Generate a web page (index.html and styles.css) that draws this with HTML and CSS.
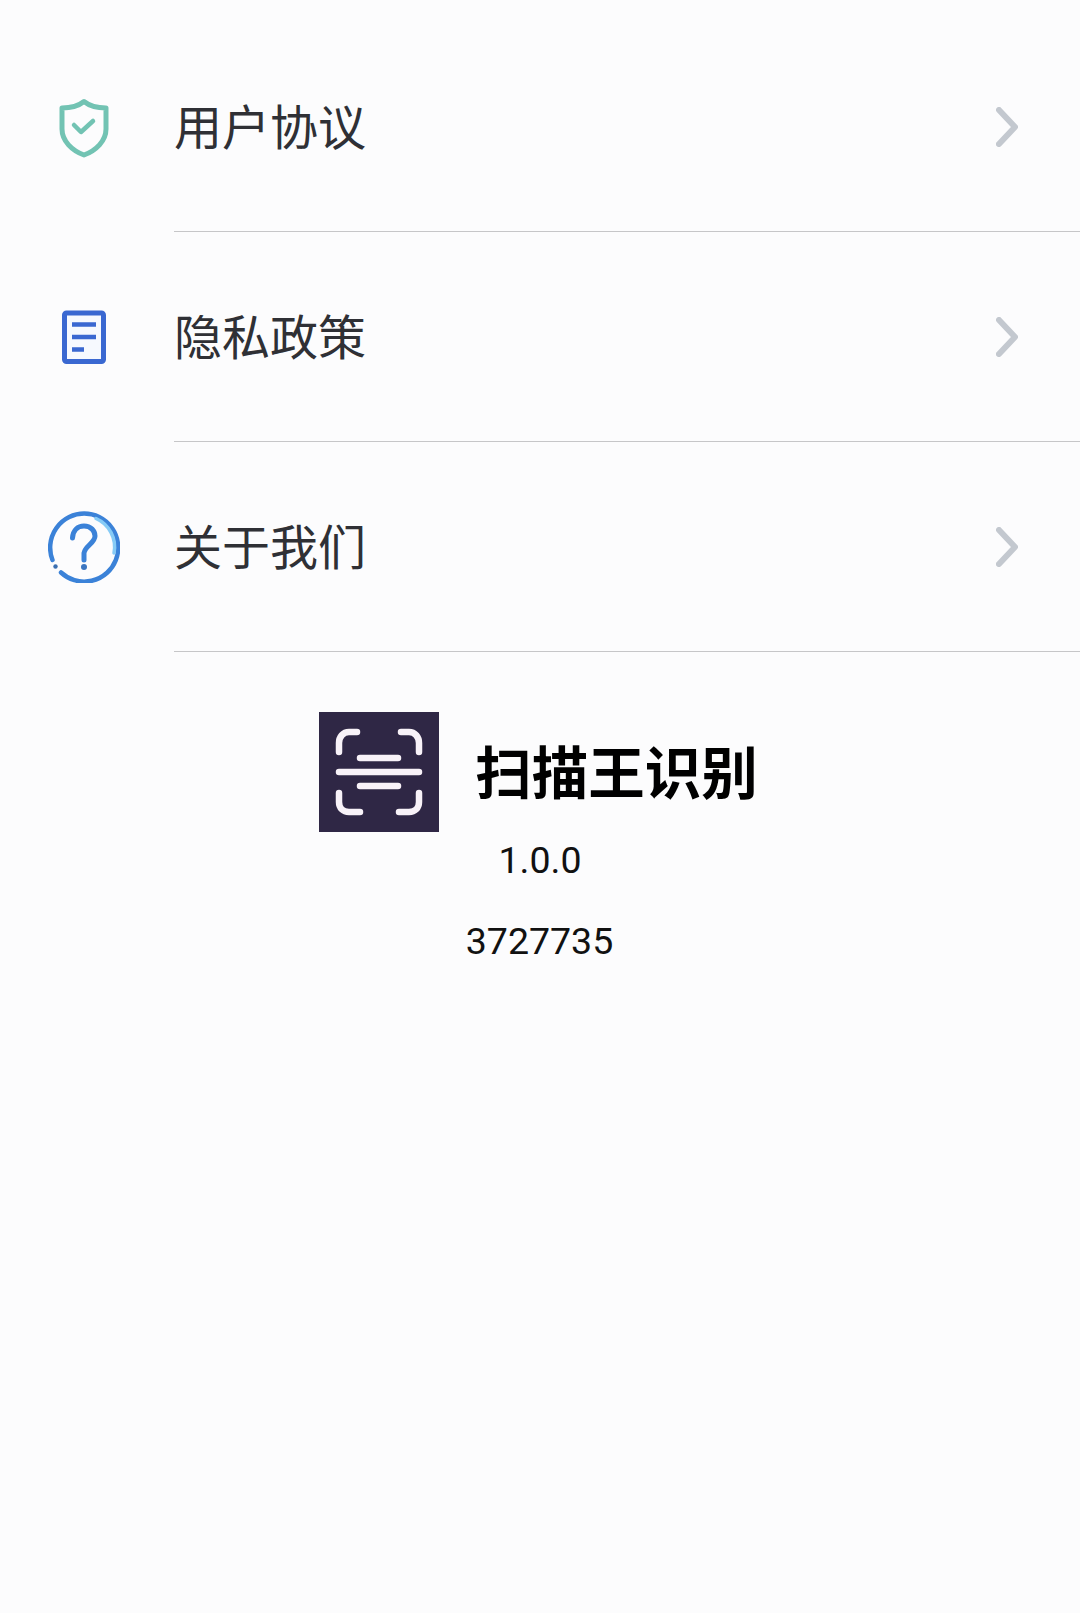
FILE: index.html
```html
<!DOCTYPE html>
<html lang="zh-CN">
<head>
<meta charset="utf-8">
<title>扫描王识别</title>
<link rel="stylesheet" href="styles.css">
</head>
<body>
<main class="page">
  <ul class="menu">
    <li class="row">
      <span class="icon-slot">
        <svg class="icon" viewBox="0 0 72 72" fill="none" stroke="#72c3b3" stroke-width="5" stroke-linejoin="round" stroke-linecap="round">
          <path d="M36 10.5C41 14.5 50 17 58 17V38C58 50 48 59.5 36 64C24 59.5 14 50 14 38V17C22 17 31 14.5 36 10.5Z"/>
          <path d="M26 34L33 41L45 30" stroke-width="4.5"/>
        </svg>
      </span>
      <div class="row-body">
        <span class="row-label">用户协议</span>
        <svg class="chevron" viewBox="0 0 22 40" fill="none" stroke="#c3c8cf" stroke-width="6" stroke-linecap="round" stroke-linejoin="round"><path d="M3 3L19 20L3 37"/></svg>
      </div>
    </li>
    <li class="row">
      <span class="icon-slot">
        <svg class="icon" viewBox="0 0 72 72" fill="none" stroke="#3a68d1" stroke-width="5">
          <rect x="16.5" y="12" width="39" height="48.5" rx="2" fill="#f6f9fe"/>
          <path d="M24 23.5H48M24 36H48M24 48.5H36" stroke-width="4.5"/>
        </svg>
      </span>
      <div class="row-body">
        <span class="row-label">隐私政策</span>
        <svg class="chevron" viewBox="0 0 22 40" fill="none" stroke="#c3c8cf" stroke-width="6" stroke-linecap="round" stroke-linejoin="round"><path d="M3 3L19 20L3 37"/></svg>
      </div>
    </li>
    <li class="row">
      <span class="icon-slot">
        <svg class="icon" viewBox="0 0 72 72" fill="none" stroke="#3b82d8" stroke-width="4.5" stroke-linecap="round">
          <path d="M13 61.5A34 34 0 1 0 4.5 49"/>
          <path d="M48 7.5A31 31 0 0 1 66 42" stroke="#86cbf6" stroke-width="3.5"/>
          <path d="M24.5 27C25 19 30 15 36 15C43 15 47 20 47 25C47 32 37 35 36 42V49" stroke-width="5"/>
          <circle cx="36" cy="56" r="3" fill="#3b75c0" stroke="none"/>
          <circle cx="7.5" cy="55.5" r="2.2" fill="#3b6fb0" stroke="none"/>
        </svg>
      </span>
      <div class="row-body">
        <span class="row-label">关于我们</span>
        <svg class="chevron" viewBox="0 0 22 40" fill="none" stroke="#c3c8cf" stroke-width="6" stroke-linecap="round" stroke-linejoin="round"><path d="M3 3L19 20L3 37"/></svg>
      </div>
    </li>
  </ul>
  <section class="about">
    <div class="brand">
      <svg class="logo" viewBox="0 0 120 120" fill="none" stroke="#f8f2f8" stroke-width="6.5" stroke-linecap="round">
        <rect width="120" height="120" fill="#2f2745" stroke="none"/>
        <path d="M20 40V31C20 25 24 20 30 20H38"/>
        <path d="M82 20H90C96 20 100 25 100 31V40"/>
        <path d="M20 81V90C20 96 24 100 30 100H41"/>
        <path d="M100 81V90C100 96 96 100 90 100H80"/>
        <path d="M20 60H100M41 46H79M41 74H79"/>
      </svg>
      <h1 class="brand-name">扫描王识别</h1>
    </div>
    <p class="version">1.0.0</p>
    <p class="serial">3727735</p>
  </section>
</main>
</body>
</html>
```
FILE: styles.css
```css
* { box-sizing: border-box; }
html, body { margin: 0; padding: 0; }
body {
  background: #fcfcfd;
  font-family: "Noto Sans CJK SC", "Noto Sans", sans-serif;
}
.page {
  min-height: 1613px;
  padding-top: 22px;
}
.menu {
  list-style: none;
  margin: 0;
  padding: 0;
}
.row {
  display: flex;
  height: 210px;
}
.icon-slot {
  flex: 0 0 174px;
  display: flex;
  align-items: center;
  padding-left: 48px;
}
.icon {
  display: block;
  width: 72px;
  height: 72px;
}
.row-body {
  flex: 1;
  display: flex;
  align-items: center;
  justify-content: space-between;
  padding: 0 62px 0 0;
  border-bottom: 1px solid #c6c6c8;
}
.row-label {
  font-size: 48px;
  line-height: 1;
  padding-bottom: 6px;
  color: #2f3035;
}
.chevron {
  display: block;
  width: 22px;
  height: 40px;
}
.about {
  display: flex;
  flex-direction: column;
  align-items: center;
  margin-top: 60px;
  font-family: Roboto, "Noto Sans", sans-serif;
  color: #111;
}
.brand {
  display: flex;
  align-items: center;
  gap: 36px;
}
.logo {
  display: block;
  width: 120px;
  height: 120px;
}
.brand-name {
  margin: 0;
  padding: 0 3px 6px 0;
  font-family: "Noto Sans CJK SC", sans-serif;
  font-size: 56.5px;
  line-height: 1;
  font-weight: 700;
  color: #000;
}
.version, .serial {
  margin: 0;
  font-size: 37.5px;
  line-height: 50px;
}
.version { margin-top: 3px; }
.serial { margin-top: 31px; padding-right: 1px; }
```
